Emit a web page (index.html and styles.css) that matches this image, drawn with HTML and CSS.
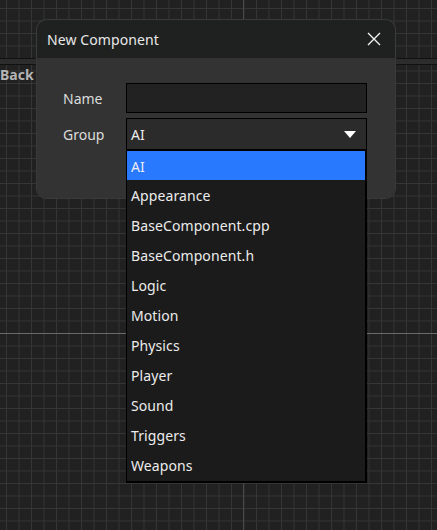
FILE: index.html
```html
<!DOCTYPE html>
<html>
<head>
<meta charset="utf-8">
<link rel="stylesheet" href="styles.css">
</head>
<body>
<div class="canvas">
  <div class="axis-h"></div>
  <div class="axis-v"></div>
  <div class="toolbar-strip"></div>
  <div class="back-label">Back</div>

  <div class="dialog">
    <div class="dialog-title">
      <span class="title-text">New Component</span>
      <svg class="close-icon" width="14" height="14" viewBox="0 0 14 14">
        <path d="M1 1 L13 13 M13 1 L1 13" stroke="#f0f0f0" stroke-width="1.4" fill="none"/>
      </svg>
    </div>
    <div class="dialog-body">
      <div class="form-grid">
        <label class="field-label">Name</label>
        <div class="text-input"></div>
        <label class="field-label">Group</label>
        <div class="select-wrap">
          <div class="select">
            <span class="select-value">AI</span>
            <svg class="select-arrow" width="12" height="7" viewBox="0 0 12 7">
              <path d="M0 0 H12 L6 7 Z" fill="#ffffff"/>
            </svg>
          </div>
          <ul class="dropdown">
            <li class="option selected">AI</li>
            <li class="option">Appearance</li>
            <li class="option">BaseComponent.cpp</li>
            <li class="option">BaseComponent.h</li>
            <li class="option">Logic</li>
            <li class="option">Motion</li>
            <li class="option">Physics</li>
            <li class="option">Player</li>
            <li class="option">Sound</li>
            <li class="option">Triggers</li>
            <li class="option">Weapons</li>
          </ul>
        </div>
      </div>
    </div>
  </div>
</div>
</body>
</html>
```

FILE: styles.css
```css
html, body {
  margin: 0;
  padding: 0;
}
body {
  width: 437px;
  height: 530px;
  overflow: hidden;
  font-family: "Noto Sans", "Open Sans", sans-serif;
  font-size: 14px;
}
.canvas {
  position: relative;
  width: 437px;
  height: 530px;
  background-color: #212121;
  background-image:
    linear-gradient(to right, #353535 1px, transparent 1px),
    linear-gradient(to bottom, #353535 1px, transparent 1px);
  background-size: 12.5px 12.5px;
  background-position: 6px 8px;
}
.axis-h {
  position: absolute;
  left: 0;
  right: 0;
  top: 333px;
  height: 1px;
  background: #6a6a6a;
}
.axis-v {
  position: absolute;
  top: 0;
  bottom: 0;
  left: 243px;
  width: 1px;
  background: #4a4a4a;
}
.toolbar-strip {
  position: absolute;
  left: 0;
  right: 0;
  top: 58px;
  height: 5px;
  background: #2c2c2c;
  border-top: 1px solid #111;
  border-bottom: 1px solid #111;
}
.back-label {
  position: absolute;
  left: 0;
  top: 65px;
  color: #b4b4b4;
  font-weight: bold;
  font-size: 14px;
  line-height: 20px;
}
.dialog {
  position: absolute;
  left: 37px;
  top: 20px;
  width: 358px;
  height: 178px;
  border-radius: 10px;
  box-shadow: 0 0 0 1px #3a3a3a;
  display: flex;
  flex-direction: column;
}
.dialog-title {
  height: 38px;
  background: #1f2121;
  border-radius: 10px 10px 0 0;
  display: flex;
  align-items: center;
  justify-content: space-between;
  padding: 0 14px 0 10px;
}
.title-text {
  color: #e8e8e8;
  font-size: 14px;
  letter-spacing: 0.1px;
}
.close-icon {
  display: block;
}
.dialog-body {
  flex: 1;
  background: #333333;
  border-radius: 0 0 10px 10px;
  padding: 25px 28px 0 26px;
}
.form-grid {
  display: grid;
  grid-template-columns: 63px 241px;
  grid-template-rows: 30px 32px;
  row-gap: 5px;
  align-items: center;
}
.field-label {
  color: #dcdcdc;
  font-size: 14px;
  padding-top: 1px;
}
.text-input {
  height: 28px;
  background: #222222;
  border: 1px solid #000;
}
.select-wrap {
  position: relative;
  height: 32px;
}
.select {
  height: 30px;
  background: #2b2b2b;
  border: 1px solid #000;
  display: flex;
  align-items: center;
  justify-content: space-between;
  padding: 0 10px 0 4px;
}
.select-value {
  color: #ececec;
  padding-top: 1px;
}
.select-arrow {
  display: block;
  margin-top: 1px;
}
.dropdown {
  position: absolute;
  left: 0;
  top: 32px;
  width: 238px;
  margin: 0;
  padding: 0 0 1px 0;
  list-style: none;
  background: #1b1b1b;
  border-left: 1px solid #000;
  border-right: 2px solid #000;
  border-bottom: 2px solid #000;
  border-top: 1px solid #000;
}
.option {
  height: 28px;
  line-height: 28px;
  padding: 2px 0 0 4px;
  color: #ececec;
  font-size: 14px;
  letter-spacing: 0.1px;
}
.option.selected {
  background: #2979ff;
  height: 27px;
  line-height: 27px;
}
```
